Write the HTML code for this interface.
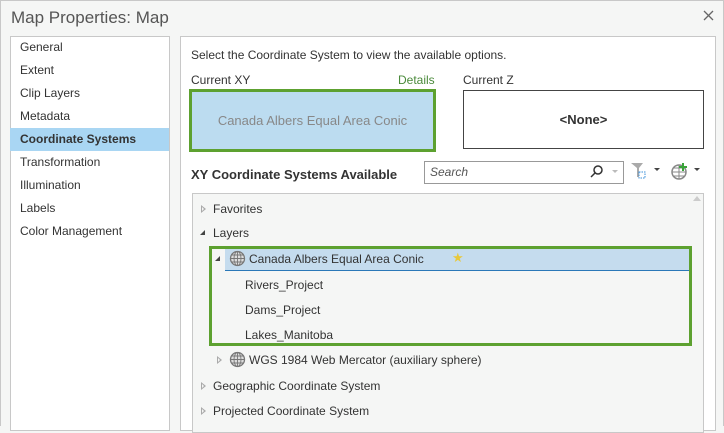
<!DOCTYPE html><html><head><style>
*{box-sizing:border-box;margin:0;padding:0}
body{width:724px;height:426px;overflow:hidden;background:#f5f6f5;font-family:"Liberation Sans",sans-serif;font-size:12px;color:#333;position:relative}
.a{position:absolute;white-space:nowrap}
.li{position:absolute;left:10px;width:159px;height:23px;padding-left:10px;line-height:23px;font-size:12px}
.tri{position:absolute;width:0;height:0;border-top:4px solid transparent;border-bottom:4px solid transparent;border-left:5px solid #aaa}
.tri:after{content:"";position:absolute;left:-4px;top:-2px;border-top:2px solid transparent;border-bottom:2px solid transparent;border-left:2.5px solid #f5f6f5}
.tdn{position:absolute;width:0;height:0;border-left:5px solid transparent;border-bottom:5px solid #444}
</style></head><body>
<div class="a" style="left:0;top:0;width:724px;height:426px;border:1px solid #c8c8c8;border-bottom:none"></div>
<div class="a" style="left:11px;top:8px;font-size:17px;color:#555">Map Properties: Map</div>
<svg class="a" style="left:703px;top:10px" width="11" height="11"><path d="M1 1L10 10M10 1L1 10" stroke="#666" stroke-width="1.3"/></svg>
<div class="a" style="left:10px;top:36px;width:160px;height:395px;background:#fff;border:1px solid #c8c8c8"></div>
<div class="li" style="top:36px">General</div>
<div class="li" style="top:59px">Extent</div>
<div class="li" style="top:82px">Clip Layers</div>
<div class="li" style="top:105px">Metadata</div>
<div class="li" style="top:128px;background:#a9d6f3;font-weight:bold">Coordinate Systems</div>
<div class="li" style="top:151px">Transformation</div>
<div class="li" style="top:174px">Illumination</div>
<div class="li" style="top:197px">Labels</div>
<div class="li" style="top:220px">Color Management</div>
<div class="a" style="left:180px;top:36px;width:536px;height:395px;background:#fff;border:1px solid #c8c8c8"></div>
<div class="a" style="left:191px;top:48px">Select the Coordinate System to view the available options.</div>
<div class="a" style="left:191px;top:73px">Current XY</div>
<div class="a" style="left:398px;top:73px;color:#4a8a3a">Details</div>
<div class="a" style="left:463px;top:73px">Current Z</div>
<div class="a" style="left:189px;top:89px;width:247px;height:63px;background:#bcdcf0;border:3px solid #5da130;color:#888;font-size:13px;text-align:center;line-height:57px">Canada Albers Equal Area Conic</div>
<div class="a" style="left:463px;top:90px;width:241px;height:59px;border:1px solid #444;text-align:center;line-height:57px;font-weight:bold;font-size:13px">&lt;None&gt;</div>
<div class="a" style="left:191px;top:167px;font-size:13px;font-weight:bold;color:#333">XY Coordinate Systems Available</div>
<div class="a" style="left:424px;top:161px;width:200px;height:23px;border:1px solid #999;padding-left:5px;line-height:21px;font-style:italic;color:#555">Search</div>
<svg class="a" style="left:590px;top:164px" width="14" height="14"><circle cx="8" cy="6" r="4" fill="none" stroke="#333" stroke-width="1.5"/><line x1="5" y1="9" x2="1" y2="13" stroke="#333" stroke-width="1.5"/></svg>
<div class="a" style="left:612px;top:170px;border-left:3px solid transparent;border-right:3px solid transparent;border-top:3px solid #bbb"></div>
<svg class="a" style="left:630px;top:161px" width="32" height="20"><path d="M1 2h12l-4 5v9l-2 0v-9z" fill="#aaa"/><rect x="9" y="11" width="6" height="6" fill="none" stroke="#3a8fd8" stroke-dasharray="1.5 1"/><path d="M24 7h6l-3 3z" fill="#444"/></svg>
<svg class="a" style="left:670px;top:161px" width="32" height="20"><circle cx="9" cy="11" r="7" fill="#fff" stroke="#888" stroke-width="1.5"/><path d="M2 11h14M9 4v14M4 7h10M4 15h10" stroke="#888"/><path d="M13 2v8M9 6h8" stroke="#3aa33a" stroke-width="2"/><path d="M24 7h6l-3 3z" fill="#444"/></svg>
<div class="a" style="left:192px;top:193px;width:512px;height:240px;background:#f5f6f5;border:1px solid #c8c8c8"></div>
<div class="a" style="left:693px;top:196px;border-left:4px solid transparent;border-right:4px solid transparent;border-bottom:5px solid #ccc"></div>
<div class="tri" style="left:201px;top:205px"></div><div class="a" style="left:213px;top:202px">Favorites</div>
<div class="tdn" style="left:200px;top:230px"></div><div class="a" style="left:213px;top:226px">Layers</div>
<div class="a" style="left:225px;top:247px;width:466px;height:24px;background:#c5dcee;border-bottom:1px solid #2a78b8"></div>
<div class="tdn" style="left:215px;top:256px"></div>
<svg class="a" style="left:229px;top:250px" width="17" height="17"><circle cx="8.5" cy="8.5" r="7" fill="#ddd" stroke="#777" stroke-width="1.3"/><path d="M1.5 8.5h14M8.5 1.5v14M3 5h11M3 12h11" stroke="#777" stroke-width="0.9"/><ellipse cx="8.5" cy="8.5" rx="3.5" ry="7" fill="none" stroke="#777" stroke-width="0.9"/></svg>
<div class="a" style="left:249px;top:252px">Canada Albers Equal Area Conic</div>
<div class="a" style="left:452px;top:250px;color:#e8c83a;font-size:13px">★</div>
<div class="a" style="left:209px;top:246px;width:483px;height:100px;border:3px solid #5da130"></div>
<div class="a" style="left:245px;top:278px">Rivers_Project</div>
<div class="a" style="left:245px;top:303px">Dams_Project</div>
<div class="a" style="left:245px;top:328px">Lakes_Manitoba</div>
<div class="tri" style="left:217px;top:356px"></div>
<svg class="a" style="left:229px;top:351px" width="17" height="17"><circle cx="8.5" cy="8.5" r="7" fill="#ddd" stroke="#777" stroke-width="1.3"/><path d="M1.5 8.5h14M8.5 1.5v14M3 5h11M3 12h11" stroke="#777" stroke-width="0.9"/><ellipse cx="8.5" cy="8.5" rx="3.5" ry="7" fill="none" stroke="#777" stroke-width="0.9"/></svg>
<div class="a" style="left:249px;top:353px">WGS 1984 Web Mercator (auxiliary sphere)</div>
<div class="tri" style="left:201px;top:382px"></div><div class="a" style="left:213px;top:379px">Geographic Coordinate System</div>
<div class="tri" style="left:201px;top:407px"></div><div class="a" style="left:213px;top:404px">Projected Coordinate System</div>
</body></html>
